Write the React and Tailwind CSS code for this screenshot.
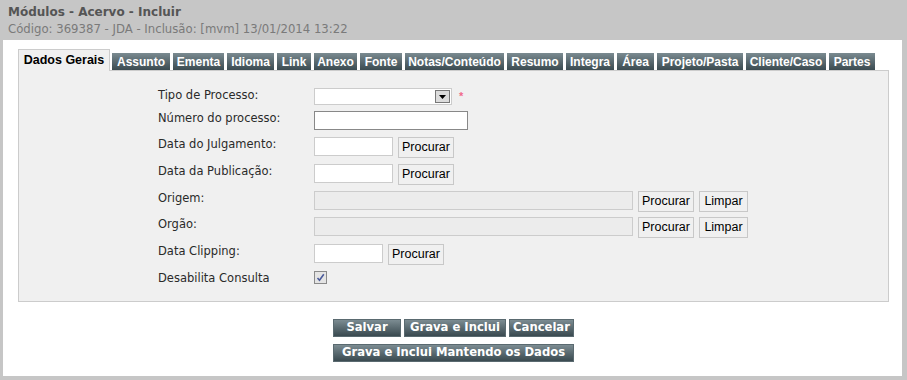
import React from "react";

const tabs = [
  ["Assunto", 58],
  ["Ementa", 51],
  ["Idioma", 47],
  ["Link", 34],
  ["Anexo", 43],
  ["Fonte", 42],
  ["Notas/Conteúdo", 99],
  ["Resumo", 56],
  ["Integra", 48],
  ["Área", 37],
  ["Projeto/Pasta", 86],
  ["Cliente/Caso", 80],
  ["Partes", 46],
];

const verdana = "font-['DejaVu_Sans',Verdana,sans-serif]";
const arial = "font-['Liberation_Sans',Arial,sans-serif]";

function Btn({ children, w }) {
  return (
    <button
      className={`h-[21px] ${w} border border-[#c8c8c8] bg-[#f0f0f0] ${arial} text-[12.5px] leading-none text-black`}
    >
      {children}
    </button>
  );
}

function Row({ h, label, children }) {
  return (
    <div className={`flex items-start ${h}`}>
      <div className={`w-[156px] ${verdana} text-[11.5px] leading-[14px] text-[#2a2a2a]`}>
        {label}
      </div>
      <div className="flex items-start gap-[5px]">{children}</div>
    </div>
  );
}

function DarkBtn({ children, w }) {
  return (
    <button
      className={`h-[18px] ${w} border border-[#5a6a70] bg-gradient-to-b from-[#7c8c92] to-[#3a4a50] ${verdana} text-[11.6px] font-bold leading-none text-white`}
    >
      {children}
    </button>
  );
}

export default function App() {
  return (
    <div className="flex h-[380px] w-[907px] flex-col bg-[#c6c6c6] pb-[4px] pl-[3px] pr-[5px]">
      <div className="h-[40px] pl-[5px] pt-[4px]">
        <div className={`${verdana} text-[12px] font-bold leading-[16px] text-[#555]`}>
          Módulos - Acervo - Incluir
        </div>
        <div className={`${verdana} mt-[2px] text-[11.7px] leading-[14px] text-[#7a7a7a]`}>
          Código: 369387 - JDA - Inclusão: [mvm] 13/01/2014 13:22
        </div>
      </div>
      <div className="flex flex-1 flex-col bg-white pl-[15px] pr-[13px] pt-[9px]">
        <div className="flex items-end">
          <div
            className={`relative z-10 -mb-px flex h-[22px] w-[92px] items-center justify-center border border-b-0 border-[#cccccc] bg-[#f0f0f0] ${arial} text-[12.5px] font-bold text-black`}
          >
            Dados Gerais
          </div>
          <div className="ml-[2px] flex items-end gap-[3px]">
            {tabs.map(([t, w]) => (
              <div
                key={t}
                style={{ width: w }}
                className={`flex h-[17px] items-center justify-center bg-gradient-to-b from-[#7b8b91] to-[#3b4b51] ${arial} text-[12px] font-bold leading-none text-white`}
              >
                {t}
              </div>
            ))}
          </div>
        </div>
        <div className="h-[232px] border border-[#cccccc] bg-[#f0f0f0] pl-[139px] pt-[17px]">
          <Row h="h-[23px]" label="Tipo de Processo:">
            <div className="flex items-center">
              <div className="flex h-[17px] w-[138px] items-center justify-end border border-[#cccccc] bg-white pr-[1px]">
                <div className="flex h-[13px] w-[15px] items-center justify-center border border-[#777] bg-[#dcdcdc]">
                  <svg width="7" height="4" viewBox="0 0 7 4">
                    <path d="M0 0h7L3.5 4z" fill="#000" />
                  </svg>
                </div>
              </div>
              <span className={`ml-[7px] ${arial} text-[11px] font-bold leading-none text-[#f06a8a]`}>*</span>
            </div>
          </Row>
          <Row h="h-[26px]" label="Número do processo:">
            <div className="h-[19px] w-[154px] border border-[#888] bg-white" />
          </Row>
          <Row h="h-[27px]" label="Data do Julgamento:">
            <div className="h-[19px] w-[79px] border border-[#cccccc] bg-white" />
            <Btn w="w-[56px]">Procurar</Btn>
          </Row>
          <Row h="h-[27px]" label="Data da Publicação:">
            <div className="h-[19px] w-[79px] border border-[#cccccc] bg-white" />
            <Btn w="w-[56px]">Procurar</Btn>
          </Row>
          <Row h="h-[26px]" label="Origem:">
            <div className="h-[19px] w-[319px] border border-[#cccccc] bg-[#ececec]" />
            <Btn w="w-[56px]">Procurar</Btn>
            <Btn w="w-[49px]">Limpar</Btn>
          </Row>
          <Row h="h-[27px]" label="Orgão:">
            <div className="h-[19px] w-[319px] border border-[#cccccc] bg-[#ececec]" />
            <Btn w="w-[56px]">Procurar</Btn>
            <Btn w="w-[49px]">Limpar</Btn>
          </Row>
          <Row h="h-[27px]" label="Data Clipping:">
            <div className="h-[19px] w-[69px] border border-[#cccccc] bg-white" />
            <Btn w="w-[56px]">Procurar</Btn>
          </Row>
          <Row h="h-[20px]" label="Desabilita Consulta">
            <div className="flex h-[13px] w-[13px] items-center justify-center border border-[#8a8a8a] bg-[#e4e4e4]">
              <svg width="9" height="9" viewBox="0 0 9 9">
                <path d="M1.5 5l2 2.2L7.8 1.3" fill="none" stroke="#4a5a9a" strokeWidth="1.6" />
              </svg>
            </div>
          </Row>
        </div>
        <div className="mt-[17px] flex flex-col items-center gap-[7px]">
          <div className="flex gap-[3px]">
            <DarkBtn w="w-[68px]">Salvar</DarkBtn>
            <DarkBtn w="w-[102px]">Grava e Inclui</DarkBtn>
            <DarkBtn w="w-[65px]">Cancelar</DarkBtn>
          </div>
          <DarkBtn w="w-[241px]">Grava e Inclui Mantendo os Dados</DarkBtn>
        </div>
      </div>
    </div>
  );
}
